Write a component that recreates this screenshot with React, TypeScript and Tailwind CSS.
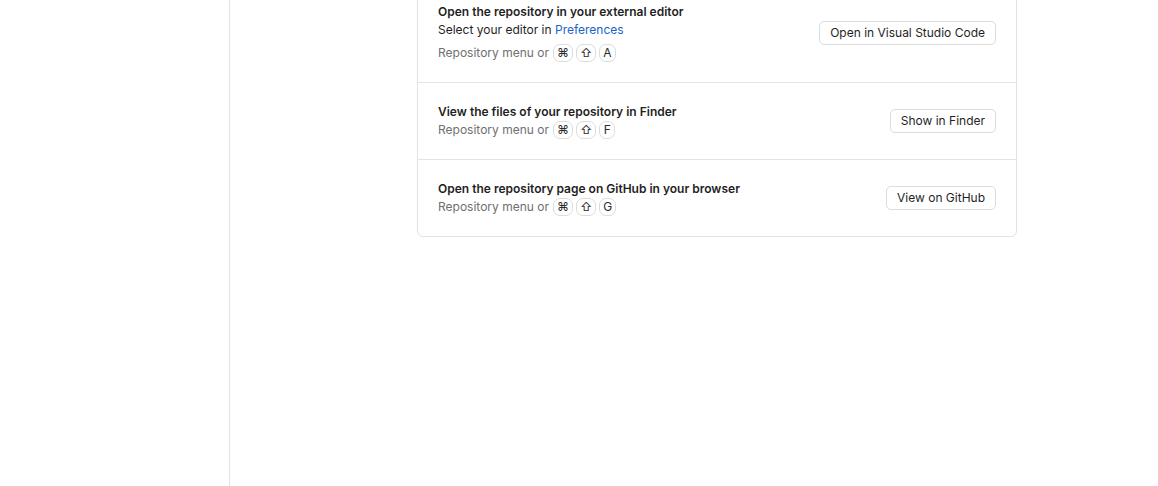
import React from 'react';

type Row = {
  title: string;
  editor?: boolean;
  keyChar: string;
  button: string;
};

const rows: Row[] = [
  {
    title: 'Open the repository in your external editor',
    editor: true,
    keyChar: 'A',
    button: 'Open in Visual Studio Code',
  },
  {
    title: 'View the files of your repository in Finder',
    keyChar: 'F',
    button: 'Show in Finder',
  },
  {
    title: 'Open the repository page on GitHub in your browser',
    keyChar: 'G',
    button: 'View on GitHub',
  },
];

function Key({ children }: { children: React.ReactNode }) {
  return (
    <span className="inline-flex items-center justify-center min-w-[16px] h-[18px] px-[3px] rounded-[7px] border border-[#dcdcdc] bg-white text-[12px] leading-none text-[#2b2b2b]">
      {children}
    </span>
  );
}

function ActionRow({ row, last }: { row: Row; last: boolean }) {
  return (
    <div
      className={`flex items-center justify-between px-5 py-5 ${
        last ? '' : 'border-b border-[#e4e4e4]'
      }`}
    >
      <div className="flex flex-col">
        <span className="text-[12px] leading-[18px] font-semibold text-[#1f1f1f]">
          {row.title}
        </span>
        {row.editor && (
          <span className="text-[12px] leading-[18px] text-[#1f1f1f]">
            Select your editor in{' '}
            <span className="text-[#1a64cc]">Preferences</span>
          </span>
        )}
        <div
          className={`flex items-center gap-[3px] text-[12px] text-[#707070] ${
            row.editor ? 'mt-[5px]' : ''
          }`}
        >
          <span className="mr-[1px]">Repository menu or</span>
          <Key>⌘</Key>
          <Key>⇧</Key>
          <Key>{row.keyChar}</Key>
        </div>
      </div>
      <button className="h-[24px] px-[10px] rounded-[5px] border border-[#dcdcdc] bg-white text-[12px] text-[#1f1f1f]">
        {row.button}
      </button>
    </div>
  );
}

export default function App() {
  return (
    <div className="flex h-[486px] w-[1158px] overflow-hidden bg-white font-['Inter','Noto_Sans',sans-serif]">
      <aside className="w-[230px] shrink-0 border-r border-[#e2e2e2] bg-white" />
      <main className="flex-1 pl-[187px]">
        <div className="-mt-[18px] w-[600px] rounded-b-[6px] border border-[#e2e2e2] bg-white">
          {rows.map((row, i) => (
            <ActionRow key={row.title} row={row} last={i === rows.length - 1} />
          ))}
        </div>
      </main>
    </div>
  );
}
